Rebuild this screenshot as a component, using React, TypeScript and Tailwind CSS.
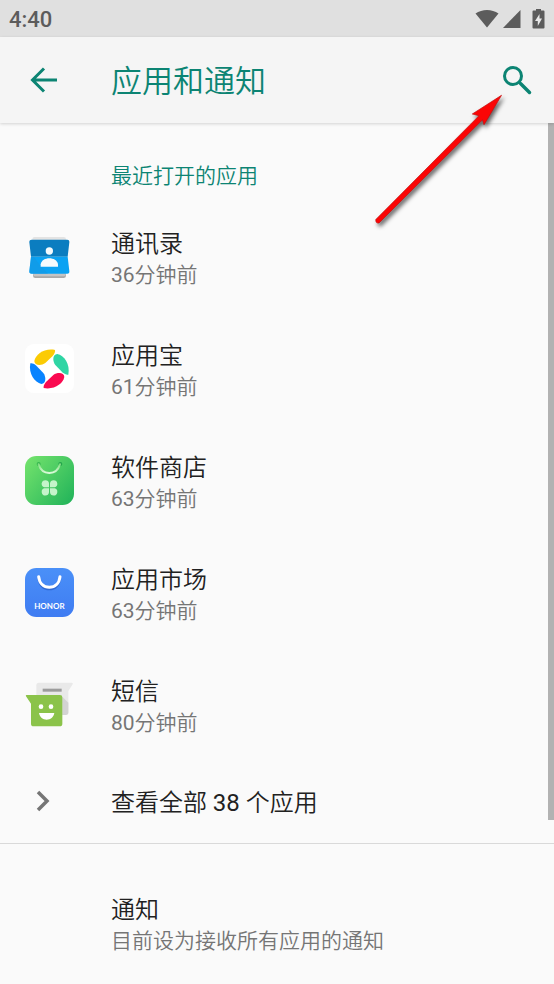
import type { ReactNode } from 'react';

const ContactsIcon = () => (
  <svg viewBox="0 -5 147 147" className="size-[49px]" aria-hidden="true">
    <rect x="22" y="10" width="101" height="40" rx="7" fill="#e3e3e3" />
    <rect x="24" y="92" width="99" height="41" rx="7" fill="#a9a9a9" />
    <rect x="24" y="90" width="99" height="38" rx="7" fill="#c4c4c4" />
    <path d="M20 18H127Q134 18 133 26L128 69H18L13 26Q12 18 20 18Z" fill="#0b7dc0" />
    <path d="M18 69H128L133 112Q134 120 127 120H20Q12 120 13 112Z" fill="#0aa2f3" />
    <path d="M47 98L26 69H18L13 112Q12 120 20 120H69Z" fill="#1595e0" opacity=".5" />
    <circle cx="73" cy="52" r="11" fill="#f4fafd" />
    <path d="M47 99V92C49 80 61 74 73 74S97 80 99 92V99Z" fill="#f4fafd" />
  </svg>
);

const petal = 'M90 18C58 12 32 31 28 51C28 59 35 63 43 63C49 63 56 61 61 57L83 36C89 29 91 23 90 18Z';

const YingyongbaoIcon = () => (
  <svg viewBox="0 0 147 147" className="size-[49px]" aria-hidden="true">
    <rect width="147" height="147" rx="26" fill="#fff" />
    <path d={petal} fill="#fbcb04" />
    <path d={petal} fill="#2fd5a4" transform="rotate(90 73 75)" />
    <path d={petal} fill="#fa0a50" transform="rotate(180 73 75)" />
    <path d={petal} fill="#0883ff" transform="rotate(270 73 75)" />
  </svg>
);

const SoftwareStoreIcon = () => (
  <svg viewBox="0 0 147 147" className="size-[49px]" aria-hidden="true">
    <defs>
      <linearGradient id="storeBg" x1="0" y1="0.1" x2="1" y2="0.9">
        <stop offset="0" stopColor="#72e26c" />
        <stop offset="1" stopColor="#23b45a" />
      </linearGradient>
      <linearGradient id="storeHandle" x1="0" y1="0" x2="0" y2="1">
        <stop offset="0" stopColor="#84df82" />
        <stop offset="1" stopColor="#dcfadb" />
      </linearGradient>
    </defs>
    <rect width="147" height="147" rx="34" fill="url(#storeBg)" />
    <circle cx="41" cy="24" r="6" fill="#36b64f" />
    <circle cx="106" cy="24" r="6" fill="#25a44c" />
    <path d="M41 25C46 42 58 51 73 51S100 42 105 25" fill="none" stroke="url(#storeHandle)" strokeWidth="6" strokeLinecap="round" />
    <g fill="#c5f4ca">
      <path d="M72 94H58A11 11 0 1 1 72 82Z" />
      <path d="M75 94H89A11 11 0 1 0 75 82Z" />
      <path d="M72 97H58A11 11 0 1 0 72 109Z" />
      <path d="M75 97H89A11 11 0 1 1 75 109Z" />
    </g>
  </svg>
);

const HonorIcon = () => (
  <svg viewBox="0 0 147 147" className="size-[49px]" aria-hidden="true">
    <defs>
      <linearGradient id="honorBg" x1="0" y1="0" x2="0" y2="1">
        <stop offset="0" stopColor="#4a90f8" />
        <stop offset="1" stopColor="#3f7cf2" />
      </linearGradient>
    </defs>
    <rect width="147" height="147" rx="34" fill="url(#honorBg)" />
    <path d="M40 31C44 54 57 64 73 64S102 54 106 31" fill="none" stroke="#3069d4" strokeWidth="6" />
    <path d="M41 26C43 46 56 58 73 58S103 46 105 26" fill="none" stroke="#fff" strokeWidth="9" strokeLinecap="round" />
    <text x="73" y="124" textAnchor="middle" fill="#fff" className="font-['Lato',sans-serif] text-[24px] font-bold">
      HONOR
    </text>
  </svg>
);

const MessagesIcon = () => (
  <svg viewBox="0 0 147 147" className="size-[49px]" aria-hidden="true">
    <path d="M42 8H141Q146 9 142 14L130 33V97Q130 105 122 105H42Q34 105 34 97V16Q34 8 42 8Z" fill="#e9e9e9" />
    <path d="M112 50L130 68V97Q130 105 122 105H112Z" fill="#d3d3d3" />
    <rect x="53" y="26" width="57" height="9" fill="#9c9c9c" />
    <path d="M5 45H105Q112 45 112 52V131Q112 139 104 139H26Q18 139 18 131V71L3 49Q1 45 5 45Z" fill="#8bc34a" />
    <circle cx="48" cy="80" r="7" fill="#fff" />
    <circle cx="78" cy="80" r="7" fill="#fff" />
    <path d="M42 99H88C86 112 76 119 65 119S44 112 42 99Z" fill="#fff" />
  </svg>
);

const recentApps = [
  { name: '通讯录', minutes: 36, icon: <ContactsIcon /> },
  { name: '应用宝', minutes: 61, icon: <YingyongbaoIcon /> },
  { name: '软件商店', minutes: 63, icon: <SoftwareStoreIcon /> },
  { name: '应用市场', minutes: 63, icon: <HonorIcon /> },
  { name: '短信', minutes: 80, icon: <MessagesIcon /> },
];

const StatusBar = () => (
  <div className="flex h-[37px] items-center justify-between bg-[#e0e0e0] pr-[9px] pl-[9px] text-[#5c5c5c]">
    <span className="pt-[2px] text-[22px] leading-6 font-medium">4:40</span>
    <div className="flex items-center">
      <svg viewBox="0 0 24 20" className="mr-[4px] h-5 w-6" fill="currentColor" aria-hidden="true">
        <path d="M0.500 4.500C7 -0.300 17 -0.300 23.500 4.500L12 18.500Z" />
      </svg>
      <svg viewBox="0 0 18 20" className="mr-[11px] h-5 w-[18px]" fill="currentColor" aria-hidden="true">
        <path d="M0 19L17.500 1V19Z" />
      </svg>
      <svg viewBox="0 0 13 20" className="h-5 w-[13px]" fill="currentColor" aria-hidden="true">
        <path d="M4 0H9V1.500H11.500Q12.500 1.500 12.500 2.500V18.500Q12.500 19.500 11.500 19.500H1.500Q0.500 19.500 0.500 18.500V2.500Q0.500 1.500 1.500 1.500H4Z" />
        <path d="M7.500 5L3 12H5.800V17L10 9.500H7.500Z" fill="#e8e8e8" />
      </svg>
    </div>
  </div>
);

const Header = () => (
  <header className="relative z-10 flex h-[86px] items-center bg-[#f5f5f5] pr-[21px] pl-[28px] text-[#0c8473] shadow-[0_1px_3px_rgba(0,0,0,0.16)]">
    <button type="button" aria-label="返回" className="w-[83px]">
      <svg viewBox="0 0 32 32" className="size-8" fill="none" stroke="currentColor" strokeWidth="3" aria-hidden="true">
        <path d="M29 16H5M16 4.500L4.500 16L16 27.500" />
      </svg>
    </button>
    <h1 className="flex-1 pt-[3px] text-[31px] leading-10 font-[350]">应用和通知</h1>
    <button type="button" aria-label="搜索">
      <svg viewBox="0 0 32 32" className="size-8" fill="none" stroke="currentColor" strokeWidth="3" aria-hidden="true">
        <circle cx="12" cy="12" r="8.500" />
        <path d="M18 18L20 20" />
        <path d="M20 20L28.500 28.500" strokeWidth="3.500" strokeLinecap="round" />
      </svg>
    </button>
  </header>
);

type RowProps = { icon?: ReactNode; title: string; summary: ReactNode };

const Row = ({ icon, title, summary }: RowProps) => (
  <button type="button" className="flex h-28 w-full items-center pl-[25px] text-left">
    <span className="w-[86px] shrink-0 pb-[3px]">{icon}</span>
    <span className="flex flex-col pt-[2px]">
      <span className="text-[24px] leading-8 text-[#212121]">{title}</span>
      <span className="text-[21px] leading-[30px] text-[#757575]">{summary}</span>
    </span>
  </button>
);

const PointerArrow = () => (
  <svg
    viewBox="0 0 140 144"
    className="pointer-events-none absolute top-[90px] left-[370px] z-20 h-36 w-[140px] drop-shadow-[2px_3px_2px_rgba(0,0,0,0.6)]"
    aria-hidden="true"
  >
    <path
      d="M131.500 5.300L102.300 24L109 25.700L5.800 129.500Q5.500 133.500 9 133L112.500 29.800L114 34.700Z"
      fill="#fb0505"
      stroke="#c40d0d"
      strokeWidth="0.700"
    />
  </svg>
);

export default function App() {
  return (
    <div className="relative flex min-h-screen flex-col overflow-hidden bg-[#fafafa] font-['Roboto','Noto_Sans_CJK_SC',sans-serif] font-[350]">
      <StatusBar />
      <Header />
      <main className="relative flex-1">
        <section className="border-b border-[#d9d9d9]">
          <h2 className="pt-[38px] pb-[10px] pl-[111px] text-[21px] leading-[31px] font-[350] text-[#0c8473]">最近打开的应用</h2>
          {recentApps.map((app) => (
            <Row
              key={app.name}
              icon={app.icon}
              title={app.name}
              summary={
                <>
                  <span className="font-normal">{app.minutes}</span>分钟前
                </>
              }
            />
          ))}
          <button type="button" className="flex h-[81px] w-full items-center pl-[28px] text-left">
            <span className="w-[83px] pb-[3px]">
              <svg viewBox="0 0 32 32" className="size-8" fill="none" stroke="#757575" strokeWidth="3.500" aria-hidden="true">
                <path d="M10 7L19 16L10 25" />
              </svg>
            </span>
            <span className="text-[24px] leading-8 text-[#212121]">
              查看全部 <span className="font-normal">38</span> 个应用
            </span>
          </button>
        </section>
        <section className="pt-6">
          <Row title="通知" summary="目前设为接收所有应用的通知" />
        </section>
        <div className="absolute top-0 right-0 h-[81%] w-[6px] bg-[#b2b2b2]" />
      </main>
      <PointerArrow />
    </div>
  );
}
